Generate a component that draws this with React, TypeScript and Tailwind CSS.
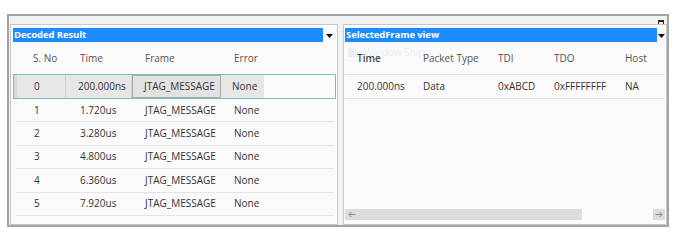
import React from "react";

const font = { fontFamily: '"Open Sans", "Noto Sans", sans-serif' };

const leftRows = [
  ["1", "1.720us", "JTAG_MESSAGE", "None"],
  ["2", "3.280us", "JTAG_MESSAGE", "None"],
  ["3", "4.800us", "JTAG_MESSAGE", "None"],
  ["4", "6.360us", "JTAG_MESSAGE", "None"],
  ["5", "7.920us", "JTAG_MESSAGE", "None"],
];

function Caret() {
  return (
    <svg width="7" height="4" viewBox="0 0 7 4">
      <path d="M0 0 H7 L3.5 4 Z" fill="#111" />
    </svg>
  );
}

function Arrow({ right }: { right?: boolean }) {
  return (
    <svg width="8" height="7" viewBox="0 0 8 7" style={right ? {} : { transform: "scaleX(-1)" }}>
      <path d="M0.5 3.5 H7 M4.5 1 L7 3.5 L4.5 6" fill="none" stroke="#8a8a8a" strokeWidth="1" />
    </svg>
  );
}

export default function App() {
  return (
    <div className="w-[684px] h-[241px] bg-white pt-[14px] pl-[7px] text-[10px] text-[#333]" style={font}>
      <div className="w-[662px] h-[213px] border-2 border-[#a3a3a3] bg-[#f2f2f2] relative flex gap-[5px] pl-[1px] pt-[8px]">
        <div className="absolute right-[3px] top-[4px] w-[6px] h-[5px] border border-[#222] border-t-2" />
        {/* Left panel */}
        <div className="w-[328px] h-[201px] border border-[#c8c8c8] bg-[#fafafa] flex flex-col pt-[3px] pl-[2px] pr-[1px]">
          <div className="flex items-center h-[14px]">
            <div className="w-[310px] h-[14px] bg-[#1b8cff] text-white font-bold text-[9.5px] leading-[14px] pl-[1px] tracking-[-0.1px]">Decoded Result</div>
            <div className="flex-1 flex justify-center pt-[1px]"><Caret /></div>
          </div>
          <div className="flex items-center h-[32px] text-[#555] pt-[1px]">
            <div className="w-[54px] pl-[20px]">S. No</div>
            <div className="w-[66px] pl-[13px]">Time</div>
            <div className="w-[89px] pl-[12px]">Frame</div>
            <div className="pl-[12px]">Error</div>
          </div>
          <div className="h-[25px] border border-[#6cc4bd] flex items-stretch">
            <div className="w-[52px] bg-[#e6e6e6] border-r border-[#d2d2d2] border-l-[3px] border-l-[#d8d8d8] pl-[17px] flex items-center">0</div>
            <div className="w-[66px] bg-[#e6e6e6] border-r border-[#d2d2d2] pl-[12px] flex items-center">200.000ns</div>
            <div className="w-[89px] bg-[#e2e2e2] border border-[#a8a8a8] pl-[11px] flex items-center">JTAG_MESSAGE</div>
            <div className="w-[43px] bg-[#e6e6e6] pl-[11px] flex items-center">None</div>
          </div>
          {leftRows.map((r) => (
            <div key={r[0]} className="h-[23.4px] border-b border-[#e4e4e4] flex items-center ml-[3px] mr-[2px]">
              <div className="w-[51px] pl-[18px]">{r[0]}</div>
              <div className="w-[66px] pl-[13px]">{r[1]}</div>
              <div className="w-[89px] pl-[12px]">{r[2]}</div>
              <div className="pl-[12px]">{r[3]}</div>
            </div>
          ))}
        </div>
        {/* Right panel */}
        <div className="w-[324px] h-[201px] border border-[#c8c8c8] bg-[#fafafa] flex flex-col pt-[3px] pl-[1px] pr-[1px] relative">
          <div className="flex items-center h-[14px]">
            <div className="w-[312px] h-[14px] bg-[#1b8cff] text-white font-bold text-[9.5px] leading-[14px] pl-[1px] tracking-[-0.1px]">SelectedFrame view</div>
            <div className="flex-1 flex justify-center pt-[1px]"><Caret /></div>
          </div>
          <div className="absolute left-[4px] top-[20px] flex items-center gap-[8px]">
            <div className="w-[8px] h-[9px] bg-[#eceff5]" />
            <div className="text-[10px] text-[#eceef2]">Window Snip</div>
          </div>
          <div className="flex items-center h-[33px] border-b border-[#e4e4e4] text-[#555] relative">
            <div className="w-[78px] pl-[12px] font-semibold text-[#444]">Time</div>
            <div className="w-[75px]">Packet Type</div>
            <div className="w-[56px]">TDI</div>
            <div className="w-[71px]">TDO</div>
            <div>Host</div>
          </div>
          <div className="flex items-center h-[24px] border-b border-[#e4e4e4]">
            <div className="w-[78px] pl-[12px]">200.000ns</div>
            <div className="w-[75px]">Data</div>
            <div className="w-[56px]">0xABCD</div>
            <div className="w-[71px]">0xFFFFFFFF</div>
            <div>NA</div>
          </div>
          <div className="flex-1" />
          <div className="h-[11px] mb-[4px] flex items-stretch">
            <div className="w-[237px] bg-[#dcdcdc] flex items-center pl-[3px]"><Arrow /></div>
            <div className="flex-1" />
            <div className="w-[12px] bg-[#dcdcdc] flex items-center justify-center"><Arrow right /></div>
          </div>
        </div>
      </div>
    </div>
  );
}
